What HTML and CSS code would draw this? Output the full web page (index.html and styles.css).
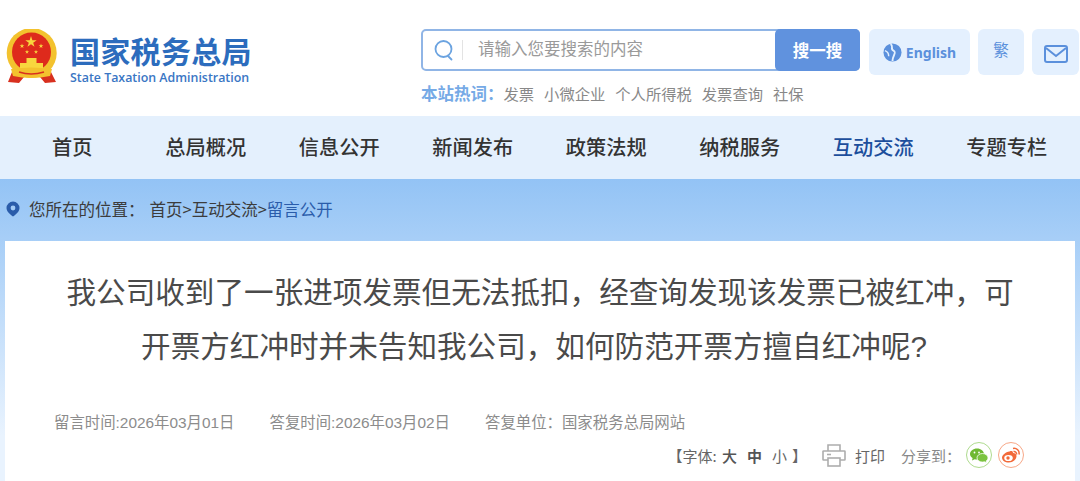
FILE: index.html
```html
<!DOCTYPE html>
<html lang="zh-CN">
<head>
  <meta charset="UTF-8" />
  <title>留言公开</title>
  <link rel="stylesheet" href="styles.css">
</head>
<body>
  <header class="top">
    <a class="logo">
      <svg class="emblem" width="52" height="56" viewBox="0 -1 52 56">
        <defs>
          <polygon id="star" points="0,-6 1.350,-1.860 5.700,-1.850 2.190,0.710 3.530,4.850 0,2.300 -3.530,4.850 -2.190,0.710 -5.700,-1.850 -1.350,-1.860" fill="#f8d63e"/>
        </defs>
        <path d="M6 42 L2 52 L13 53 L18 47 L34 47 L39 53 L50 52 L45 42 Z" fill="#d8301f"/>
        <circle cx="25.700" cy="23" r="25" fill="#f3c22e"/>
        <circle cx="25.500" cy="22" r="19.500" fill="#de2a1c"/>
        <use href="#star" transform="translate(25,12)"/>
        <use href="#star" transform="translate(16,16) scale(.42)"/>
        <use href="#star" transform="translate(35,16) scale(.42)"/>
        <use href="#star" transform="translate(21,22) scale(.36)"/>
        <use href="#star" transform="translate(30,22) scale(.36)"/>
        <rect x="20.500" y="28" width="10" height="5" fill="#f8d63e"/>
        <rect x="14" y="33" width="23" height="7" fill="#f8d63e"/>
        <path d="M5 39 Q25 36 46 39 L44 46 Q25 50 7 46 Z" fill="#f3c22e"/>
        <path d="M13 42 Q25 46 38 42" fill="none" stroke="#d8301f" stroke-width="1.500"/>
      </svg>
      <div class="logo-text">
        <div class="logo-cn">国家税务总局</div>
        <div class="logo-en">State Taxation Administration</div>
      </div>
    </a>
    <div class="top-right">
      <div class="top-row">
        <div class="search">
          <svg class="search-icon" width="20" height="22" viewBox="0 0 20 22" fill="none" stroke="#6ba3e0" stroke-width="1.8">
            <circle cx="9.5" cy="10" r="8"/>
            <path d="M14 17l3.5 3.5" stroke-linecap="round"/>
          </svg>
          <span class="search-line"></span>
          <span class="search-text">请输入您要搜索的内容</span>
          <span class="search-btn">搜一搜</span>
        </div>
        <a class="chip chip-en">
          <svg width="19" height="19" viewBox="0 0 20 20">
            <circle cx="10" cy="10" r="9.5" fill="#5b90dc"/>
            <path d="M8 1 C12 4 7 6 11 8 C15 10 10 13 10 19" fill="none" stroke="#e4f0fe" stroke-width="2"/>
            <path d="M2 8 C5 9 6 11 6 14" fill="none" stroke="#e4f0fe" stroke-width="1.500"/>
          </svg>
          English
        </a>
        <a class="chip chip-fan">繁</a>
        <a class="chip chip-mail">
          <svg width="24" height="18" viewBox="0 0 24 18" fill="none" stroke="#5b90dc" stroke-width="2">
            <rect x="1" y="1" width="22" height="16" rx="2"/>
            <path d="M2 3l10 8 10-8"/>
          </svg>
        </a>
      </div>
      <div class="hot">
        <b>本站热词：</b><a>发票</a><a>小微企业</a><a>个人所得税</a><a>发票查询</a><a>社保</a>
      </div>
    </div>
  </header>

  <nav class="nav">
    <a>首页</a>
    <a>总局概况</a>
    <a>信息公开</a>
    <a>新闻发布</a>
    <a>政策法规</a>
    <a>纳税服务</a>
    <a class="active">互动交流</a>
    <a>专题专栏</a>
  </nav>

  <main class="page">
    <div class="crumb">
      <svg width="14" height="16" viewBox="0 0 14 16">
        <path d="M7 0.5a6.5 6.5 0 0 1 6.5 6.5c0 3.5-3.5 6.5-6.5 8.5C4 13.500 0.500 10.500 0.500 7A6.500 6.500 0 0 1 7 0.500z" fill="#2a5caa"/>
        <circle cx="7" cy="7" r="2.400" fill="#a3cbf6"/>
      </svg>
      <span class="crumb-label">您所在的位置：</span>
      <span>首页&gt;互动交流&gt;<a class="crumb-now">留言公开</a></span>
    </div>
    <article class="card">
      <h1>我公司收到了一张进项发票但无法抵扣，经查询发现该发票已被红冲，可开票方红冲时并未告知我公司，如何防范开票方擅自红冲呢?<span class="tail"></span></h1>
      <div class="meta">
        <span>留言时间:2026年03月01日</span>
        <span>答复时间:2026年03月02日</span>
        <span>答复单位：国家税务总局网站</span>
      </div>
      <div class="tools">
        <span class="font-size">【字体: <b>大</b><b class="mid">中</b><i>小</i>】</span>
        <svg class="print" width="24" height="23" viewBox="0 0 24 23" fill="none" stroke="#adadad" stroke-width="1.600">
          <path d="M6 7V1h12v6"/>
          <path d="M6 16H1.500a.5.500 0 0 1-.5-.5V7.500a.5.500 0 0 1 .5-.5h21a.5.500 0 0 1 .5.500v8a.5.500 0 0 1-.5.500H18"/>
          <path d="M5 10.500h4"/>
          <rect x="6" y="14" width="12" height="8"/>
        </svg>
        <span class="print-text">打印</span>
        <span class="share">分享到：</span>
        <span class="round round-wx">
          <svg width="18" height="15" viewBox="0 0 18 15">
            <path d="M7 0.500c3.900 0 7 2.500 7 5.500s-3.100 5.500-7 5.500c-.8 0-1.600-.1-2.300-.3L2 12.500l.6-2.400C1 9.100 0 7.700 0 6 0 3 3.100.500 7 .500z" fill="#6fb833"/>
            <path d="M12.500 5.500c3 0 5.500 1.900 5.500 4.300 0 1.300-.7 2.400-1.800 3.200l.4 1.800-2.100-1c-.6.200-1.300.3-2 .3-3 0-5.500-1.900-5.500-4.300s2.500-4.300 5.500-4.300z" fill="#7cc341" stroke="#fff" stroke-width=".8"/>
            <circle cx="4.500" cy="4.500" r=".9" fill="#fff"/>
            <circle cx="9" cy="4.500" r=".9" fill="#fff"/>
          </svg>
        </span>
        <span class="round round-wb">
          <svg width="18" height="16" viewBox="0 0 18 16">
            <path d="M7.500 4.500C9.500 3.500 11 4 11 6c2 0 3.500 1.200 3.500 3 0 3.300-3.500 6.500-7.500 6.500-4 0-7-2-7-5C0 8.500 3.500 5 7.500 4.500z" fill="#f26a3a"/>
            <ellipse cx="6.500" cy="11" rx="4.300" ry="3.100" fill="#fff"/>
            <circle cx="6" cy="11" r="1.700" fill="#f26a3a"/>
            <path d="M11 1.500a5 5 0 0 1 6 6M11.500 4.500a2.500 2.500 0 0 1 3 3" fill="none" stroke="#f26a3a" stroke-width="1.500"/>
          </svg>
        </span>
      </div>
    </article>
  </main>
</body>
</html>
```
FILE: styles.css
```css
* {
  box-sizing: border-box;
}
html, body {
  margin: 0;
  height: 481px;
  overflow: hidden;
}
body {
  font-family: "Liberation Sans", "Noto Sans CJK SC", sans-serif;
  background: #fff;
  color: #333;
}
.top {
  height: 116px;
  display: flex;
  justify-content: space-between;
  padding: 29px 0 0 6px;
}
.logo {
  display: flex;
  gap: 12px;
  height: 58px;
}
.logo-text {
  padding-top: 5px;
}
.logo-cn {
  font-family: "Noto Sans CJK SC", sans-serif;
  font-size: 30px;
  font-weight: 700;
  line-height: 32px;
  color: #2c6cbd;
  letter-spacing: 0.3px;
  white-space: nowrap;
}
.logo-en {
  font-family: "Open Sans", sans-serif;
  font-size: 12.400px;
  font-weight: 600;
  line-height: 16px;
  margin-top: 4px;
  color: #3a76c4;
  white-space: nowrap;
}
.top-right {
  width: 659px;
}
.top-row {
  display: flex;
  gap: 8px;
}
.search {
  width: 439px;
  height: 42px;
  border: 2px solid #90b5e6;
  border-radius: 5px;
  display: flex;
  align-items: center;
  margin-right: 1px;
}
.search-icon {
  margin-left: 11px;
}
.search-line {
  width: 1px;
  height: 20px;
  background: #e3e3e3;
  margin: 0 15px 0 8px;
}
.search-text {
  font-family: "Noto Sans CJK SC", sans-serif;
  font-size: 16.500px;
  line-height: 20px;
  margin-top: -4px;
  color: #9a9a9a;
  flex: 1;
}
.search-btn {
  width: 85px;
  height: 42px;
  margin: 0 -2px 0 0;
  background: #6092de;
  border-radius: 5px;
  color: #fff;
  font-family: "Noto Sans CJK SC", sans-serif;
  font-weight: 700;
  font-size: 16.500px;
  display: flex;
  align-items: center;
  justify-content: center;
}
.chip {
  height: 46px;
  background: #e4f0fe;
  border-radius: 6px;
  display: flex;
  align-items: center;
  justify-content: center;
  color: #5b90dc;
}
.chip-en {
  width: 101px;
  gap: 4px;
  font-family: "Noto Sans", sans-serif;
  font-weight: 700;
  font-size: 14px;
  padding-top: 1px;
}
.chip-fan {
  width: 46px;
  font-family: "Noto Sans CJK SC", sans-serif;
  font-size: 15.500px;
  padding-bottom: 6px;
}
.chip-mail {
  width: 47px;
  padding-top: 3px;
}
.hot {
  font-family: "Noto Sans CJK SC", sans-serif;
  font-size: 15.300px;
  line-height: 20px;
  margin-top: 8px;
  color: #888;
  display: flex;
}
.hot b {
  color: #76aae6;
  font-size: 16.500px;
}
.hot a {
  margin-right: 10px;
}
.nav {
  height: 63px;
  background: #e4f0fd;
  display: grid;
  grid-template-columns: repeat(8, 133.500px);
  align-items: center;
  justify-items: center;
  padding: 0 0 2px 5.500px;
  font-family: "Noto Sans CJK SC", sans-serif;
  font-size: 20.200px;
  font-weight: 500;
  color: #333;
}
.nav .active {
  color: #1c4e9c;
}
.page {
  height: 302px;
  padding: 0 5px;
  background: linear-gradient(#93c3f5, #e9f3fe 85%);
}
.crumb {
  height: 62px;
  padding: 0 0 3px 1px;
  display: flex;
  align-items: center;
  font-family: "Noto Sans CJK SC", sans-serif;
  font-size: 16.500px;
  color: #3c3c3c;
}
.crumb-label {
  margin: 0 5px 0 9px;
}
.crumb-now {
  color: #2a5caa;
}
.card {
  background: #fff;
  height: 240px;
  padding: 0 49px;
}
.card h1 {
  margin: 0;
  padding: 25px 0 0;
  font-family: "Liberation Sans", "Noto Sans CJK SC", sans-serif;
  font-size: 29.600px;
  font-weight: 400;
  line-height: 54px;
  color: #4a4a4a;
  text-align: center;
}
.card h1 .tail {
  display: inline-block;
  width: 12px;
}
.meta {
  margin-top: 39px;
  display: flex;
  gap: 35px;
  font-size: 15.400px;
  line-height: 20px;
  color: #8c8c8c;
}
.tools {
  margin-top: 9px;
  display: flex;
  justify-content: flex-end;
  align-items: center;
  padding-right: 2px;
  font-family: "Noto Sans CJK SC", sans-serif;
  font-size: 15px;
  color: #666;
}
.font-size b {
  font-weight: 500;
  margin-left: 2px;
  color: #555;
}
.font-size .mid {
  font-weight: 700;
  margin-left: 10px;
}
.font-size i {
  font-style: normal;
  margin: 0 5px 0 10px;
}
.print {
  margin-left: 15px;
}
.print-text {
  margin-left: 9px;
}
.share {
  margin-left: 16px;
  color: #888;
}
.round {
  width: 26px;
  height: 26px;
  border-radius: 50%;
  display: flex;
  align-items: center;
  justify-content: center;
  background: #fff;
}
.round-wx {
  border: 1px solid #aedb8e;
  margin-left: 5px;
}
.round-wb {
  border: 1px solid #f7a888;
  margin-left: 6px;
}
```
